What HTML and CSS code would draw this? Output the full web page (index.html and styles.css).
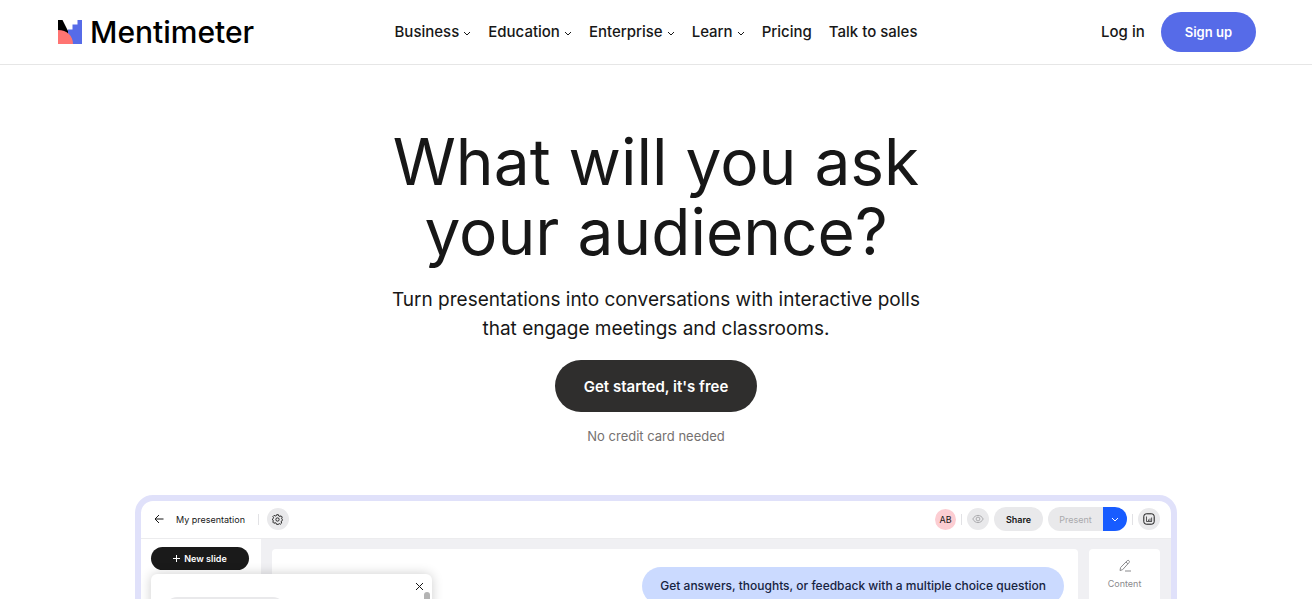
FILE: index.html
```html
<!DOCTYPE html>
<html lang="en">
<head>
    <meta charset="UTF-8">
    <meta name="viewport" content="width=device-width, initial-scale=1.0">
    <title>Mentimeter</title>
    <link rel="stylesheet" href="styles.css">
</head>
<body>
    <header class="site-header">
        <a href="#" class="logo">
            <svg width="24" height="24" viewBox="0 0 24 24" aria-hidden="true">
                <path fill="#000" d="M0 0h4.500l5.500 11v5H0z"/>
                <path fill="#566be8" d="M24 0v24H10V9.500h4.500v-5h5V0z"/>
                <path fill="#ff7472" d="M0 10c9 0 15 6 15 14H0z"/>
            </svg>
            <span>Mentimeter</span>
        </a>
        <nav class="main-nav">
            <button type="button">Business <svg class="chevron" viewBox="0 0 8 5"><path d="M1 1l3 3 3-3"/></svg></button>
            <button type="button">Education <svg class="chevron" viewBox="0 0 8 5"><path d="M1 1l3 3 3-3"/></svg></button>
            <button type="button">Enterprise <svg class="chevron" viewBox="0 0 8 5"><path d="M1 1l3 3 3-3"/></svg></button>
            <button type="button">Learn <svg class="chevron" viewBox="0 0 8 5"><path d="M1 1l3 3 3-3"/></svg></button>
            <a href="#">Pricing</a>
            <a href="#">Talk to sales</a>
        </nav>
        <div class="account">
            <a href="#">Log in</a>
            <button type="button" class="signup">Sign up</button>
        </div>
    </header>

    <main>
        <section class="hero">
            <h1>What will you ask<br>your audience?</h1>
            <p class="lead">Turn presentations into conversations with interactive polls<br>that engage meetings and classrooms.</p>
            <button type="button" class="cta">Get started, it's free</button>
            <p class="note">No credit card needed</p>
        </section>

        <section class="preview">
            <div class="toolbar">
                <button type="button" class="plain" aria-label="Back">
                    <svg width="10" height="10" viewBox="0 0 10 10"><path d="M9.500 5H1M5 1L1 5l4 4"/></svg>
                </button>
                <span class="deck-name">My presentation</span>
                <span class="divider"></span>
                <button type="button" class="round" aria-label="Settings">
                    <svg width="11" height="11" viewBox="0 0 12 12"><path d="M5 .8h2l.4 1.400 1.200.5 1.300-.7 1.300 1.400-.7 1.200.4 1.100.4.3v1l-.8.4-.5 1.200.5 1.300-1.300 1.200-1.200-.6-1 .5L7 11.300H5l-.5-1.300-1.100-.5-1.300.6L.9 8.800l.6-1.300L1 6.600l-.4-.2v-1L1.300 5l.4-1L1 2.800l1.300-1.300 1.300.7 1.100-.4z"/><circle cx="6" cy="6" r="1.800"/></svg>
                </button>
                <div class="toolbar-right">
                    <span class="avatar">AB</span>
                    <span class="divider"></span>
                    <button type="button" class="round muted" aria-label="Preview">
                        <svg width="12" height="12" viewBox="0 0 12 12"><path d="M.8 6C3.200 1.200 8.800 1.200 11.200 6 8.800 10.800 3.200 10.800.8 6z"/><circle cx="6" cy="6" r="1.900"/></svg>
                    </button>
                    <button type="button" class="share">Share</button>
                    <div class="present">
                        <button type="button" class="present-label" disabled>Present</button>
                        <button type="button" class="present-more" aria-label="Present options">
                            <svg width="8" height="5" viewBox="0 0 8 5"><path d="M1 1l3 3 3-3"/></svg>
                        </button>
                    </div>
                    <span class="divider"></span>
                    <button type="button" class="round" aria-label="Results">
                        <svg width="12" height="12" viewBox="0 0 12 12"><rect x=".8" y=".8" width="10.400" height="10.400" rx="2.500"/><path d="M3.500 3.500v5h5.500M5.500 8V6.500M7 8V5.500M8.600 8V4.500" stroke-width=".7"/></svg>
                    </button>
                </div>
            </div>

            <div class="editor">
                <aside class="slides">
                    <button type="button" class="new-slide">
                        <svg width="7" height="7" viewBox="0 0 7 7"><path d="M3.500 0v7M0 3.500h7"/></svg>
                        New slide
                    </button>
                    <div class="popover">
                        <button type="button" class="plain close" aria-label="Close">
                            <svg width="9" height="9" viewBox="0 0 9 9"><path d="M1 1l7 7M8 1L1 8"/></svg>
                        </button>
                        <div class="search"></div>
                        <div class="scroll-thumb"></div>
                    </div>
                </aside>
                <div class="canvas">
                    <p class="bubble">Get answers, thoughts, or feedback with a multiple choice question</p>
                </div>
                <div class="tools">
                    <button type="button" class="plain tool">
                        <svg width="12" height="13" viewBox="0 0 12 13"><path d="M1 11.500l.6-3L8.300 1.600c1-1 2.900.7 1.900 1.800L3.600 10.700zM7 3l2 1.900M6 12h6"/></svg>
                        Content
                    </button>
                </div>
            </div>
        </section>
    </main>
</body>
</html>
```
FILE: styles.css
```css
* {
    box-sizing: border-box;
}

html {
    scrollbar-width: none;
}

body {
    margin: 0;
    font-family: Inter, "Liberation Sans", sans-serif;
    background-color: #fff;
    color: #171717;
}

a {
    color: inherit;
    text-decoration: none;
}

button {
    font-family: inherit;
    color: inherit;
    border: none;
    padding: 0;
    background: none;
    cursor: pointer;
}

svg {
    fill: none;
    stroke: currentColor;
    flex-shrink: 0;
}

/* header */
.site-header {
    display: grid;
    grid-template-columns: 1fr auto 1fr;
    align-items: center;
    padding: 12px 56px;
    border-bottom: 1px solid #e6e6e6;
}

.logo {
    display: flex;
    align-items: center;
    gap: 8px;
    padding-left: 2px;
    font-size: 30px;
    line-height: 40px;
    font-weight: 500;
    color: #000;
}

.logo svg {
    stroke: none;
}

.main-nav {
    display: flex;
    align-items: center;
    gap: 17px;
}

.main-nav a,
.main-nav button,
.account a {
    font-size: 15px;
    line-height: 24px;
    font-weight: 500;
}

.main-nav button {
    display: flex;
    align-items: center;
    gap: 4px;
}

.chevron {
    width: 8px;
    height: 5px;
    margin-top: 2px;
}

.account {
    display: flex;
    justify-content: flex-end;
    align-items: center;
    gap: 16px;
}

.signup {
    height: 40px;
    padding: 0 24px;
    border-radius: 20px;
    background-color: #566be8;
    color: #fff;
    font-size: 13px;
    font-weight: 600;
}

/* hero */
.hero {
    display: flex;
    flex-direction: column;
    align-items: center;
    padding: 62px 24px 48px;
    text-align: center;
}

h1 {
    margin: 0 0 18px;
    font-size: 64px;
    line-height: 70px;
    font-weight: 400;
}

.lead {
    margin: 0 0 17px;
    font-size: 19px;
    line-height: 29px;
}

.cta {
    height: 52px;
    padding: 0 29px;
    border-radius: 26px;
    background-color: #2f2e2d;
    color: #fff;
    font-size: 15px;
    font-weight: 600;
}

.note {
    margin: 14px 0 0;
    font-size: 13px;
    line-height: 21px;
    color: #757170;
}

/* product preview */
.preview {
    max-width: 1042px;
    margin: 0 auto;
    border: 6px solid #e0e1fa;
    border-radius: 18px;
    overflow: hidden;
    font-size: 9px;
}

.toolbar {
    display: flex;
    align-items: center;
    height: 38px;
    padding: 0 11px 1px 13px;
    border-bottom: 1px solid #ececee;
}

.plain,
.round {
    display: flex;
    align-items: center;
    justify-content: center;
}

.deck-name {
    margin: 0 13px 0 12px;
}

.divider {
    width: 1px;
    height: 11px;
    background-color: #e2e2e5;
}

.round {
    width: 22px;
    height: 22px;
    border-radius: 50%;
    background-color: #e9e9eb;
}

.toolbar > .round {
    margin-left: 8px;
}

.muted {
    color: #aaaaad;
}

.toolbar-right {
    display: flex;
    align-items: center;
    gap: 5px;
    margin-left: auto;
}

.avatar {
    width: 21px;
    border-radius: 50%;
    background-color: #fccdd2;
    line-height: 21px;
    text-align: center;
}

.share {
    width: 49px;
    height: 24px;
    border-radius: 12px;
    background-color: #e9e9eb;
    font-size: 9px;
    font-weight: 600;
}

.present {
    display: flex;
    height: 24px;
    border-radius: 12px;
    overflow: hidden;
}

.present-label {
    width: 55px;
    background-color: #e9e9eb;
    color: #aaaaad;
    font-size: 9px;
}

.present-more {
    width: 24px;
    background-color: #185cff;
    color: #fff;
}

.present-more svg {
    display: block;
    margin: 0 auto;
}

.editor {
    display: flex;
    min-height: 480px;
    background-color: #f0f0f3;
}

.slides {
    position: relative;
    width: 120px;
    padding: 8px 10px;
    background-color: #fff;
}

.new-slide {
    display: flex;
    align-items: center;
    justify-content: center;
    gap: 4px;
    width: 98px;
    height: 23px;
    border-radius: 12px;
    background-color: #1a1a1a;
    color: #fff;
    font-size: 9px;
    font-weight: 600;
}

/* opens over the slide */
.popover {
    position: absolute;
    top: 35px;
    left: 10px;
    width: 281px;
    height: 400px;
    padding: 8px;
    border-radius: 6px;
    background-color: #fff;
    box-shadow: 0 0 12px rgba(0, 0, 0, 0.2);
}

.close {
    margin-left: auto;
}

.search {
    width: 120px;
    height: 24px;
    margin: 6px 0 0 6px;
    border-radius: 12px;
    background-color: #e9e9eb;
}

.scroll-thumb {
    position: absolute;
    top: 18px;
    right: 2px;
    width: 6px;
    height: 80px;
    border-radius: 3px;
    background-color: #b4b4b4;
}

.canvas {
    flex: 1;
    margin: 10px 11px 11px;
    padding: 18px 14px;
    border-radius: 4px;
    background-color: #fff;
}

.bubble {
    width: fit-content;
    margin: 0 0 0 auto;
    padding: 0 18px;
    border-radius: 19px;
    background-color: #cbdaff;
    color: #17233f;
    font-size: 12px;
    line-height: 38px;
    font-weight: 500;
}

.tools {
    width: 71px;
    margin: 10px 11px 11px 0;
    padding-top: 10px;
    border-radius: 4px;
    background-color: #fff;
}

.tool {
    flex-direction: column;
    gap: 6px;
    width: 100%;
    color: #8a8a8d;
    font-size: 9px;
}
```
